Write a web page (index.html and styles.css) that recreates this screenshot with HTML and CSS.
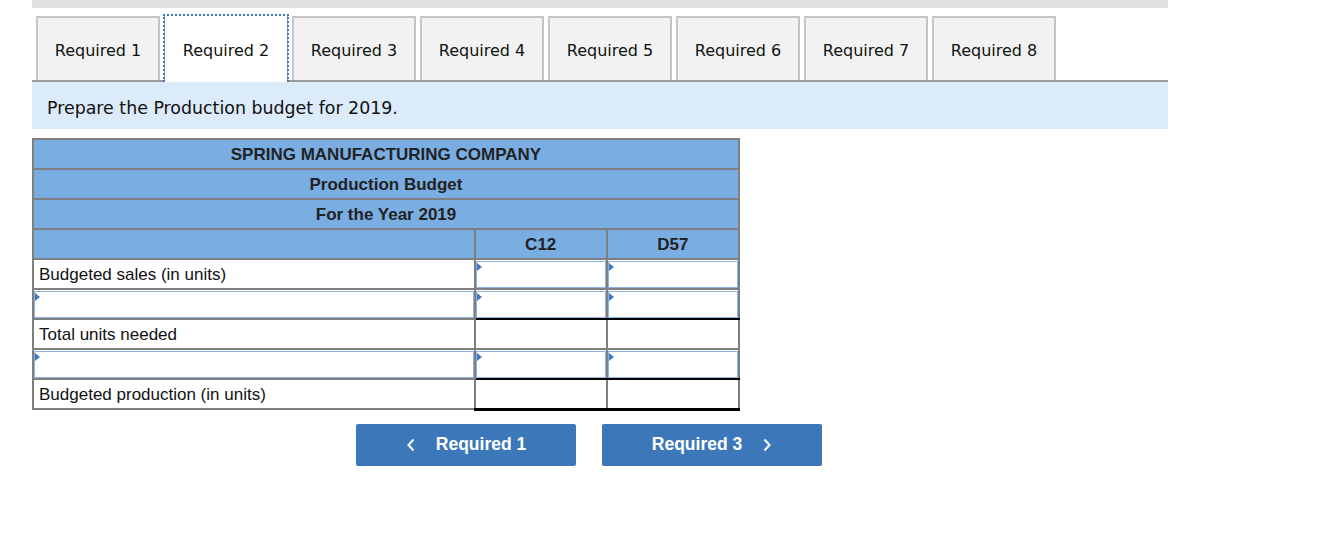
FILE: index.html
```html
<!DOCTYPE html>
<html>
<head>
<meta charset="utf-8">
<link rel="stylesheet" href="styles.css">
</head>
<body>
<div class="wrap">
  <div class="topbar"></div>
  <div class="tabs">
    <div class="tab">Required 1</div>
    <div class="tab active">Required 2</div>
    <div class="tab">Required 3</div>
    <div class="tab">Required 4</div>
    <div class="tab">Required 5</div>
    <div class="tab">Required 6</div>
    <div class="tab">Required 7</div>
    <div class="tab">Required 8</div>
  </div>
  <div class="prompt">Prepare the Production budget for 2019.</div>
  <table class="budget">
    <tr class="head"><td colspan="3">SPRING MANUFACTURING COMPANY</td></tr>
    <tr class="head"><td colspan="3">Production Budget</td></tr>
    <tr class="head"><td colspan="3">For the Year 2019</td></tr>
    <tr class="head"><td class="lab"></td><td class="val">C12</td><td class="val">D57</td></tr>
    <tr>
      <td class="lab">Budgeted sales (in units)</td>
      <td class="inp"><div class="box"></div></td>
      <td class="inp"><div class="box"></div></td>
    </tr>
    <tr>
      <td class="inp"><div class="box"></div></td>
      <td class="inp pre-total"><div class="box"></div></td>
      <td class="inp pre-total"><div class="box"></div></td>
    </tr>
    <tr>
      <td class="lab">Total units needed</td>
      <td class="total"></td>
      <td class="total"></td>
    </tr>
    <tr>
      <td class="inp"><div class="box"></div></td>
      <td class="inp pre-total"><div class="box"></div></td>
      <td class="inp pre-total"><div class="box"></div></td>
    </tr>
    <tr>
      <td class="lab">Budgeted production (in units)</td>
      <td class="total final"></td>
      <td class="total final"></td>
    </tr>
  </table>
  <div class="nav">
    <button class="btn"><svg class="chev" width="10" height="14" viewBox="0 0 10 14"><polyline points="7.5,1.5 2.5,7 7.5,12.5" fill="none" stroke="#fff" stroke-width="2"/></svg>Required 1</button>
    <button class="btn">Required 3<svg class="chev right" width="10" height="14" viewBox="0 0 10 14"><polyline points="2.5,1.5 7.5,7 2.5,12.5" fill="none" stroke="#fff" stroke-width="2"/></svg></button>
  </div>
</div>
</body>
</html>
```
FILE: styles.css
```css
html, body {
  margin: 0;
  padding: 0;
  background: #fff;
}
.wrap {
  width: 1136px;
  margin-left: 32px;
}
.topbar {
  height: 8px;
  background: #e1e1e1;
}
.tabs {
  display: flex;
  gap: 4px;
  padding-left: 4px;
  margin-top: 8px;
  border-bottom: 2px solid #9a9a9a;
}
.tab {
  border: 2px solid #c6c6c6;
  border-bottom: none;
  background: #f2f2f2;
  font-family: "DejaVu Sans", Verdana, sans-serif;
  font-size: 16px;
  color: #111;
  display: flex;
  align-items: center;
  justify-content: center;
  padding-top: 2px;
  box-sizing: border-box;
  height: 64px;
  width: 124px;
}
.tab.active {
  position: relative;
  background: #fff;
  border-color: #a0a0a0;
  border-width: 0 1px;
  margin-bottom: -2px;
  height: 66px;
  padding-top: 4px;
  padding-bottom: 2px;
}
.tab.active::after {
  content: "";
  position: absolute;
  left: -2px;
  right: -2px;
  top: -2px;
  bottom: 0;
  border: 2px dotted #3c78b9;
  border-bottom: none;
}
.prompt {
  background: #dcebf9;
  height: 47px;
  display: flex;
  align-items: center;
  padding-left: 15px;
  padding-top: 4px;
  box-sizing: border-box;
  font-family: "DejaVu Sans", Verdana, sans-serif;
  font-size: 17.4px;
  color: #111;
}
.budget {
  margin-top: 9px;
  border-collapse: collapse;
  width: 708px;
  font-family: "Liberation Sans", Arial, sans-serif;
  font-size: 17px;
  color: #111;
}
.budget td {
  border: 2px solid #7f7f7f;
  height: 30px;
  padding: 1px 0 0 0;
  box-sizing: border-box;
}
.head td {
  background: #7aade2;
  font-weight: bold;
  text-align: center;
  color: #222;
}
.lab {
  width: 441px;
  padding-left: 5px !important;
  text-align: left;
}
.val { width: 132px; }
.budget td.inp {
  padding: 0;
}
.box {
  position: relative;
  height: 27px;
  margin-top: 1px;
  box-sizing: border-box;
  border: 1px solid #8db3e2;
  background: #fff;
}
.box::before {
  content: "";
  position: absolute;
  left: 0;
  top: 1px;
  border-left: 5px solid #3d78bf;
  border-top: 4px solid transparent;
  border-bottom: 4px solid transparent;
}
.budget td.pre-total {
  border-bottom: 2px solid #000;
}
.budget td.total {
  border-top: 2px solid #000;
}
.budget td.final {
  border-bottom: 3px solid #000;
}
.nav {
  display: flex;
  gap: 26px;
  margin-top: 13px;
  margin-left: 324px;
}
.btn {
  width: 220px;
  height: 42px;
  border: none;
  border-radius: 2px;
  background: #3c78b9;
  color: #fff;
  font-family: "Liberation Sans", Arial, sans-serif;
  font-weight: bold;
  font-size: 17.5px;
  display: flex;
  align-items: center;
  justify-content: center;
  padding: 0;
}
.chev {
  margin-right: 20px;
}
.chev.right {
  margin-right: 0;
  margin-left: 20px;
}
```
